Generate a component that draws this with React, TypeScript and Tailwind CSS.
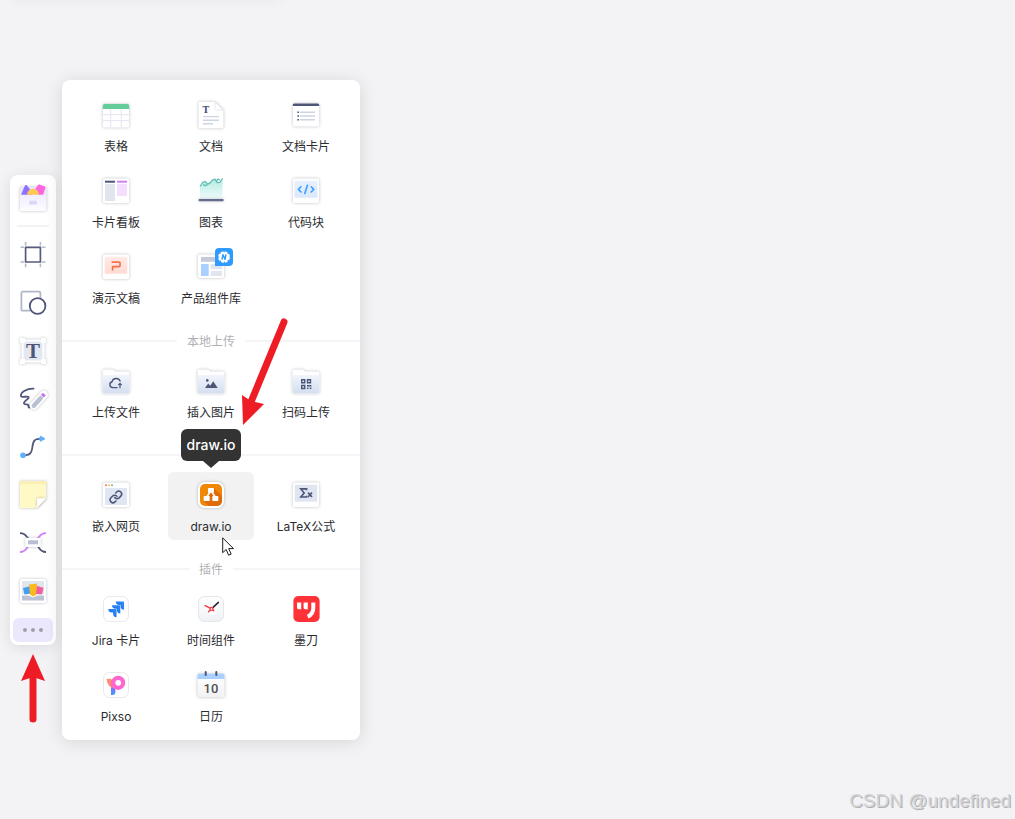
import { type ReactNode } from "react";
import clsx from "clsx";

function Icon({ children }: { children: ReactNode }) {
  return (
    <svg
      viewBox="0 0 40 40"
      className="size-10 shrink-0 overflow-visible"
      fill="none"
      aria-hidden="true"
    >
      {children}
    </svg>
  );
}

const paper = "drop-shadow-[0_0.5px_1.5px_rgba(40,42,60,0.32)]";

function Card({ y = 6.5, h = 24.5 }: { y?: number; h?: number }) {
  return <rect x="6.8" y={y} width="26.4" height={h} rx="2" fill="#fff" className={paper} />;
}

function Folder({ children }: { children: ReactNode }) {
  return (
    <Icon>
      <linearGradient id="folder" x1="0" y1="0" x2="0" y2="1">
        <stop stopColor="#f1f5fc" />
        <stop offset="1" stopColor="#d3deef" />
      </linearGradient>
      <path
        className={paper}
        fill="#fff"
        d="M6.5 9.2a1.8 1.8 0 0 1 1.8-1.8h8.2c1.4 0 1.8 2.2 3.2 2.2h12a1.8 1.8 0 0 1 1.8 1.8v18.4a1.8 1.8 0 0 1-1.8 1.8H8.3a1.8 1.8 0 0 1-1.8-1.8z"
      />
      <path fill="url(#folder)" d="M6.8 13h26.4v16.8a1.5 1.5 0 0 1-1.5 1.5H8.3a1.5 1.5 0 0 1-1.5-1.5z" />
      {children}
    </Icon>
  );
}

const TableIcon = () => (
  <Icon>
    <Card y={8} h={23.5} />
    <path fill="#64cc9a" d="M6.8 13V9.5A1.5 1.5 0 0 1 8.3 8h23.4a1.5 1.5 0 0 1 1.5 1.5V13z" />
    <path stroke="#e3e6f1" d="M14.7 13v18M25.3 13v18M7 18.7h26M7 24.7h26" />
  </Icon>
);

const DocIcon = () => (
  <Icon>
    <path className={paper} fill="#fff" d="M9 5.8h15l8.5 8.5v16.5a1.5 1.5 0 0 1-1.5 1.5H9a1.500 1.500 0 0 1-1.500-1.500V7.300A1.500 1.500 0 0 1 9 5.800z" />
    <path fill="#fff" stroke="#e0e2ea" strokeWidth=".8" d="M24 6v6.800a1.300 1.300 0 0 0 1.300 1.300h7z" />
    <text x="11.5" y="16.5" fontSize="9" fontWeight="700" fill="#4d5578" className="font-['DejaVu_Serif',serif]">T</text>
    <path stroke="#cdd4e3" strokeWidth="1.4" d="M12 20.6h16M12 24.2h16M12 27.8h10" />
  </Icon>
);

const DocCardIcon = () => (
  <Icon>
    <Card y={7.5} h={23} />
    <path fill="#4d5578" d="M6.8 10V9a1.5 1.5 0 0 1 1.5-1.5h23.4A1.5 1.5 0 0 1 33.2 9v1z" />
    <path stroke="#cdd4e3" strokeWidth="1.4" d="M14 16.2h15M14 20h15M14 23.8h15" />
    <path stroke="#4d5578" strokeWidth="1.5" d="M11.4 16.2H13M11.4 20H13M11.4 23.8H13" />
  </Icon>
);

const KanbanIcon = () => (
  <Icon>
    <Card />
    <path fill="#4d5578" d="M9 8.7h10v2H9z" />
    <path fill="#e0e5ee" d="M9 12h10v17H9z" />
    <path fill="#d07ff5" d="M21 8.7h10v2H21z" />
    <path fill="#f4defe" d="M21 12h10v12H21z" />
  </Icon>
);

const ChartIcon = () => (
  <Icon>
    <linearGradient id="area" x1="0" y1="0" x2="0" y2="1">
      <stop stopColor="#b4ebe5" />
      <stop offset="1" stopColor="#effbfa" />
    </linearGradient>
    <path fill="url(#area)" d="M9 26.5V15l2.5-4 3-1 2.500 2.500 4-3.500 3-1.500 2 3.500 3-1 2.500-3v19.500z" />
    <path
      stroke="#5fbfb3"
      strokeWidth="1.3"
      strokeLinejoin="round"
      d="M9 14.5l2.5-4 3-.8 2 2.4 2.7-1.2 1.8-2.6 3-1.2 2.2 3.6 2.6-.3 2.9-4M12 13l3 .5 4-2.5M25 9.500l2-2.500 2 1"
    />
    <path fill="#646b8e" className={paper} d="M7.7 27h24.8v2.2H7.7z" />
  </Icon>
);

const CodeIcon = () => (
  <Icon>
    <linearGradient id="code" x1="0" y1="0" x2="0" y2="1">
      <stop stopColor="#e9f1fd" />
      <stop offset="1" stopColor="#d9e8fb" />
    </linearGradient>
    <Card />
    <path fill="url(#code)" d="M8.5 8.7h23v17h-23z" />
    <path
      stroke="#3c9dff"
      strokeWidth="1.6"
      strokeLinejoin="round"
      strokeLinecap="round"
      d="M15 14.8l-2.6 2.6L15 20M25.2 14.8l2.6 2.6-2.6 2.6M21.4 13.2l-2.6 8.200"
    />
  </Icon>
);

const SlidesIcon = () => (
  <Icon>
    <linearGradient id="slides" x1="0" y1="0" x2="0" y2="1">
      <stop stopColor="#ffebe7" />
      <stop offset="1" stopColor="#ffd9d2" />
    </linearGradient>
    <Card />
    <path fill="url(#slides)" d="M8.7 8.7h22.6v17H8.7z" />
    <path stroke="#f9704c" strokeWidth="1.7" strokeLinejoin="round" d="M15.6 14.2h7.6q.8 0 .8.8v2.8q0 .8-.8.8h-6.6v4" />
  </Icon>
);

const LibraryIcon = () => (
  <Icon>
    <Card y={6.5} h={23.5} />
    <path fill="#c5c9d8" d="M10 9h20v4.7H10z" />
    <path fill="#a9d0ff" d="M10 16h7.7v12H10z" />
    <path fill="#e0e5ee" d="M19.7 16H31v5.3H19.7zM19.7 23H31v5H19.7z" />
    <path fill="#2f9bff" d="M24 18V4a4 4 0 0 1 4-4h10a4 4 0 0 1 4 4v10a4 4 0 0 1-4 4z" />
    <circle cx="33" cy="9" r="4.8" fill="#fff" />
    <circle cx="33" cy="9" r="5" stroke="#fff" strokeWidth="1.8" strokeDasharray="2.8 1.13" />
    <path stroke="#2f9bff" strokeWidth="1.4" strokeLinejoin="round" d="M31 11.6l.9-5 2.2 4.8.9-5" />
  </Icon>
);

const UploadIcon = () => (
  <Folder>
    <path stroke="#4d5578" strokeWidth="1.4" strokeLinecap="round" d="M21 25.6h-4.200a3 3 0 0 1-.7-5.900 4.200 4.200 0 0 1 8-.6" />
    <path stroke="#4d5578" strokeWidth="1.2" d="M24 26.2v-4.6M22.300 23.200l1.700-1.800 1.700 1.800" />
  </Folder>
);

const PictureIcon = () => (
  <Folder>
    <circle cx="16.3" cy="18.4" r="1.3" fill="#4d5578" />
    <path fill="#4d5578" d="M14 26l3.2-4.5 2 2.2 3-4.4L26.7 26z" />
  </Folder>
);

const QrIcon = () => (
  <Folder>
    <path stroke="#4d5578" strokeWidth="1.4" d="M15.7 17.7h3v3h-3zM21.5 17.7h3v3h-3zM15.7 23.5h3v3h-3z" />
    <path fill="#4d5578" d="M21 23h4.400v1.500H21zM21 25.600h1.500v1.500H21zM23.800 25.600h1.600v1.500h-1.600z" />
  </Folder>
);

const WebIcon = () => (
  <Icon>
    <Card />
    <circle cx="10" cy="9.3" r="1" fill="#f26b5e" />
    <circle cx="13" cy="9.3" r="1" fill="#f6c04d" />
    <circle cx="16" cy="9.3" r="1" fill="#5cc46b" />
    <path fill="#e0e7f2" d="M9 12h22v17H9z" />
    <g transform="translate(12.9 14) scale(.58)" stroke="#4d5578" strokeWidth="2.6" strokeLinecap="round">
      <path d="M10 13a5 5 0 0 0 7.54.54l3-3a5 5 0 0 0-7.07-7.07l-1.72 1.71" />
      <path d="M14 11a5 5 0 0 0-7.54-.54l-3 3a5 5 0 0 0 7.07 7.07l1.71-1.71" />
    </g>
  </Icon>
);

const DrawioIcon = () => (
  <Icon>
    <rect x="7" y="6" width="26" height="26" rx="6.5" fill="#fff" className={paper} />
    <rect x="9" y="8" width="22" height="22" rx="5" fill="#f08705" />
    <path fill="#df6c0c" d="M23 12l8 8v5a5 5 0 0 1-5 5h-8.500l-4.800-5 6-8z" />
    <path stroke="#fff" strokeWidth="1.5" d="M16 20.5l3.5-5M24 20.5l-3.500-5" />
    <rect x="17" y="12" width="6" height="4.8" rx=".8" fill="#fff" />
    <rect x="12.7" y="20" width="6" height="5" rx=".8" fill="#fff" />
    <rect x="21.3" y="20" width="6" height="5" rx=".8" fill="#fff" />
  </Icon>
);

const LatexIcon = () => (
  <Icon>
    <Card />
    <path fill="#dfe6f2" d="M8.7 8.7h22.6v17H8.7z" />
    <path stroke="#4d5578" strokeWidth="1.6" d="M20.6 14.2v-1.300h-5.800l3.400 4.100-3.400 4h5.800v-1.300" />
    <path stroke="#4d5578" strokeWidth="1.6" d="M22 16.6l4 4.4M26 16.6L22 21" />
  </Icon>
);

const JiraIcon = () => (
  <Icon>
    <rect x="7.5" y="6.5" width="25" height="25" rx="6" fill="#fff" stroke="#e9e9ec" />
    <linearGradient id="jira" x1="1" y1="0" x2="0" y2="1">
      <stop stopColor="#2f8bff" />
      <stop offset="1" stopColor="#146ee6" />
    </linearGradient>
    <g fill="url(#jira)" transform="translate(12.3 11.5) scale(.655)">
      <path d="M11.57 11.51H0a5.22 5.22 0 0 0 5.23 5.22h2.13v2.06A5.22 5.22 0 0 0 12.57 24V12.52a1 1 0 0 0-1-1.01z" />
      <path d="M17.29 5.76H5.74a5.22 5.22 0 0 0 5.21 5.21h2.13v2.06a5.22 5.22 0 0 0 5.22 5.21V6.76a1 1 0 0 0-1.01-1z" />
      <path d="M23.01 0H11.46a5.22 5.22 0 0 0 5.21 5.22h2.13v2.05A5.22 5.22 0 0 0 24 12.48V1a1 1 0 0 0-.99-1z" />
    </g>
  </Icon>
);

const ClockIcon = () => (
  <Icon>
    <linearGradient id="clock" x1="0" y1="0" x2="0" y2="1">
      <stop stopColor="#fff" />
      <stop offset="1" stopColor="#eef1f5" />
    </linearGradient>
    <rect x="7.5" y="6.5" width="25" height="25" rx="6" fill="url(#clock)" stroke="#e3e6ea" />
    <circle cx="20.5" cy="19" r="6.5" fill="#fafbfc" />
    <path stroke="#22252e" strokeWidth="1.5" strokeLinecap="round" d="M21.8 17.6l5.6-5.2" />
    <path stroke="#f53b45" strokeWidth="1.4" strokeLinecap="round" d="M14 15.6l5.2 2.6M19.2 20.2l-1.800 1.600M22 20l.8.8" />
    <circle cx="20.5" cy="18.9" r="1.5" stroke="#f53b45" strokeWidth="1.2" />
  </Icon>
);

const ModaoIcon = () => (
  <Icon>
    <rect x="7.4" y="6" width="26.2" height="26" rx="5" fill="#ff3237" />
    <path fill="#fff" d="M11 12.4h4.2v6.8h-2.800a1.400 1.400 0 0 1-1.400-1.400zM17.600 12.400h4.200v6.800H19a1.400 1.400 0 0 1-1.400-1.400z" />
    <path stroke="#fff" strokeWidth="4" d="M27.300 12.400v5.400c0 4.600-2.200 7.400-5.600 8.800" />
  </Icon>
);

const PixsoIcon = () => (
  <Icon>
    <linearGradient id="pixso-arm" x1="0" y1="0" x2="1" y2="1">
      <stop stopColor="#ff9b5e" />
      <stop offset="1" stopColor="#ff6fa8" />
    </linearGradient>
    <linearGradient id="pixso-stem" x1="0" y1="0" x2="0" y2="1">
      <stop stopColor="#a05bff" />
      <stop offset="1" stopColor="#3d9bff" />
    </linearGradient>
    <rect x="7.5" y="6.500" width="25" height="25" rx="6" fill="#fff" stroke="#e9e9ec" />
    <path fill="url(#pixso-stem)" d="M15 18l4.400 3v5.600A2.600 2.600 0 0 1 16.800 29H15z" />
    <path fill="url(#pixso-arm)" d="M10.600 12.800h4.200l5.200 5.600-1.600 4.200a9.600 9.600 0 0 1-7.800-9.800z" />
    <circle cx="22.2" cy="16.8" r="5" stroke="#ff66d0" strokeWidth="4.200" />
  </Icon>
);

const CalendarIcon = () => (
  <Icon>
    <linearGradient id="cal" x1="0" y1="0" x2="0" y2="1">
      <stop stopColor="#fff" />
      <stop offset="1" stopColor="#f2f2f4" />
    </linearGradient>
    <rect x="6.5" y="7.7" width="27" height="23.6" rx="2" fill="url(#cal)" className={paper} />
    <path fill="#a9d0ff" d="M6.500 13V9.500a1.800 1.800 0 0 1 1.800-1.800h23.400a1.800 1.800 0 0 1 1.800 1.800V13z" />
    <path stroke="#4d5578" strokeWidth="2" strokeLinecap="round" d="M14.7 6v3M25.300 6v3" />
    <text x="20" y="26.6" textAnchor="middle" fontSize="13" fontWeight="500" fill="#505050" className="font-[Roboto,sans-serif]">10</text>
  </Icon>
);

const MaterialsIcon = () => (
  <Icon>
    <linearGradient id="box" x1="0" y1="0" x2="0" y2="1">
      <stop stopColor="#e9e5ff" />
      <stop offset="1" stopColor="#fdfdff" />
    </linearGradient>
    <rect x="7" y="9" width="26.5" height="24" rx="2" fill="url(#box)" className={paper} />
    <path fill="#8c70ff" d="M8 16.800l4-9.200q.6-1.200 1.800-.4l4.800 6.400v3.200z" />
    <path fill="#ff66dd" d="M22 11.600l2.800-4.400q.6-1 1.800-.6l5.200 1.800q1 .4.6 1.400l-2.200 7h-5.400z" />
    <path fill="#ffc94f" d="M14 16.800a6 6 0 0 1 12 0z" />
    <rect x="16" y="22.7" width="8" height="3.8" rx="1" fill="#dbd6f8" />
  </Icon>
);

const FrameIcon = () => (
  <Icon>
    <path
      stroke="#b3bac8"
      strokeWidth="1.6"
      d="M7.5 12.300H11M29 12.300h3.500M7.500 27H11M29 27h3.500M12.600 7v3.500M27.400 7v3.500M12.600 28.800v3.500M27.400 28.800v3.500"
    />
    <path stroke="#565b7e" strokeWidth="1.7" d="M12.600 12.300h14.800V27H12.600z" />
  </Icon>
);

const ShapesIcon = () => (
  <Icon>
    <rect x="8.400" y="8.700" width="19" height="19" rx="1.5" stroke="#b0b7c6" strokeWidth="1.8" />
    <circle cx="24.6" cy="23" r="7.800" fill="#fff" stroke="#50557a" strokeWidth="1.8" />
  </Icon>
);

const TextIcon = () => (
  <Icon>
    <g className={paper}>
      <path fill="#e3e8f0" stroke="#fff" strokeWidth="2" d="M9.500 9.500h21v21h-21z" />
      <path fill="#fff" d="M7 7h5v5H7zM28 7h5v5h-5zM7 28h5v5H7zM28 28h5v5h-5z" />
    </g>
    <text x="20" y="26.600" textAnchor="middle" fontSize="21" fontWeight="700" fill="#4d5578" className="font-['Liberation_Serif',serif]">T</text>
  </Icon>
);

const PenIcon = () => (
  <Icon>
    <path
      stroke="#50557a"
      strokeWidth="1.8"
      strokeLinecap="round"
      d="M20.500 9.700C14 9.400 7.600 13 7.900 16.600c.3 2.800 5.600.2 7.200 1.200 2.400 1.600-4.600 4-4.200 6.600.3 1.800 3.600.4 4.400 1.600.6 1-.4 2 1 2.600"
    />
    <path className={paper} stroke="#fff" strokeWidth="8" strokeLinecap="round" d="M21 26.500l9.800-10.800" />
    <path stroke="#b9c0d2" strokeWidth="4.500" strokeLinecap="round" d="M20.800 26.800l7-7.700" />
    <path stroke="#cb72f5" strokeWidth="4" d="M29.400 17.200l2-2.200" />
  </Icon>
);

const ConnectorIcon = () => (
  <Icon>
    <path stroke="#565b7e" strokeWidth="1.8" d="M10 28.300c7 0 8.700-2 9.400-8.300s2-8.300 9.300-8.300" />
    <circle cx="10" cy="28.300" r="2.800" fill="#5fb0ff" />
    <path fill="#5fb0ff" stroke="#5fb0ff" strokeLinejoin="round" d="M27.500 9.200l4.500 2.500-4.500 2.600-1-2.600z" />
  </Icon>
);

const StickyIcon = () => (
  <Icon>
    <path className={paper} fill="#fff9c6" d="M7 6.200h26.300v17.300L24 33H7z" />
    <path fill="#f9efb0" d="M7 6.200h26.300v3H7z" />
    <path className={paper} fill="#fff" d="M24 32.800v-8a1.500 1.500 0 0 1 1.500-1.500h7.800z" />
  </Icon>
);

const MindMapIcon = () => (
  <Icon>
    <path stroke="#50557a" strokeWidth="1.8" d="M7 10.200c7 0 6 5 9 5M33 29c-7 0-6-5-9-6" />
    <path stroke="#d07ff5" strokeWidth="1.8" d="M33 10.200c-7 0-6 5-9 5M7 29c7 0 6-5 9-6" />
    <rect x="12.3" y="14.7" width="15.500" height="9.200" rx="1.5" fill="#fff" className={paper} />
    <path fill="#b9bed4" d="M15 17.300h10v4H15z" />
  </Icon>
);

const GalleryIcon = () => (
  <Icon>
    <rect x="7" y="8" width="26.200" height="24" rx="2" fill="#fff" className={paper} />
    <path fill="#e0e6f0" d="M9 10h22v13H9z" />
    <path fill="#b9c3d4" d="M9 24.500h6.500l4.500 2 4.500-2H31v5H9z" />
    <path fill="#42a0ee" d="M10 17l7-1.800 1 7.300-6.600 1z" />
    <path fill="#f25fa0" d="M23.500 14.800l7 2-1.500 6.700-6.500-.5z" />
    <path fill="#f9b91f" d="M16 13.600l8-1-1 11.400-3 1.500-3-2z" />
  </Icon>
);

interface Entry {
  label: string;
  icon: () => ReactNode;
  active?: boolean;
}

const groups: { title?: string; items: Entry[] }[] = [
  {
    items: [
      { label: "表格", icon: TableIcon },
      { label: "文档", icon: DocIcon },
      { label: "文档卡片", icon: DocCardIcon },
      { label: "卡片看板", icon: KanbanIcon },
      { label: "图表", icon: ChartIcon },
      { label: "代码块", icon: CodeIcon },
      { label: "演示文稿", icon: SlidesIcon },
      { label: "产品组件库", icon: LibraryIcon },
    ],
  },
  {
    title: "本地上传",
    items: [
      { label: "上传文件", icon: UploadIcon },
      { label: "插入图片", icon: PictureIcon },
      { label: "扫码上传", icon: QrIcon },
    ],
  },
  {
    items: [
      { label: "嵌入网页", icon: WebIcon },
      { label: "draw.io", icon: DrawioIcon, active: true },
      { label: "LaTeX公式", icon: LatexIcon },
    ],
  },
  {
    title: "插件",
    items: [
      { label: "Jira 卡片", icon: JiraIcon },
      { label: "时间组件", icon: ClockIcon },
      { label: "墨刀", icon: ModaoIcon },
      { label: "Pixso", icon: PixsoIcon },
      { label: "日历", icon: CalendarIcon },
    ],
  },
];

const tools = [
  { name: "画板", icon: FrameIcon },
  { name: "图形", icon: ShapesIcon },
  { name: "文本", icon: TextIcon },
  { name: "画笔", icon: PenIcon },
  { name: "连线", icon: ConnectorIcon },
  { name: "便签", icon: StickyIcon },
  { name: "思维导图", icon: MindMapIcon },
  { name: "图片", icon: GalleryIcon },
];

function Toolbar() {
  return (
    <nav
      aria-label="工具栏"
      className="relative flex w-[46px] shrink-0 flex-col items-center rounded-lg bg-white pb-[3px] shadow-[0_2px_14px_rgba(0,0,0,0.1)]"
    >
      <button aria-label="素材库" className="flex h-[46px] items-center">
        <MaterialsIcon />
      </button>
      <div className="my-1 h-0.5 w-8 bg-[#f3f3f5]" />
      {tools.map(({ name, icon: Glyph }) => (
        <button key={name} aria-label={name} className="flex h-12 items-center">
          <Glyph />
        </button>
      ))}
      <button
        aria-label="更多"
        className="mt-[3px] flex h-6 w-10 items-center justify-center gap-1 rounded-md bg-[#ebe7fd]"
      >
        <span className="size-1 rounded-full bg-[#a1a0a8]" />
        <span className="size-1 rounded-full bg-[#a1a0a8]" />
        <span className="size-1 rounded-full bg-[#a1a0a8]" />
      </button>
      <svg viewBox="0 0 26 70" className="absolute top-[479px] left-[10px] h-[70px] w-[26px]" aria-hidden="true">
        <path d="M13 65V20" stroke="#ee1c25" strokeWidth="7" strokeLinecap="round" />
        <path d="M13 0l12 27-12-4-12 4z" fill="#ee1c25" />
      </svg>
    </nav>
  );
}

function Divider({ title }: { title?: string }) {
  return (
    <div className="mt-[18px] mb-1.5 flex h-[22px] items-center gap-2.5 text-xs text-[#b1b1b5]">
      <div className="h-0.5 flex-1 bg-[#f5f5f7]" />
      {title && (
        <>
          <h2 className="pt-0.5">{title}</h2>
          <div className="h-0.5 flex-1 bg-[#f5f5f7]" />
        </>
      )}
    </div>
  );
}

function PanelItem({ label, icon: Glyph, active }: Entry) {
  return (
    <button
      className={clsx(
        "relative flex h-[68px] flex-col items-center rounded-md pt-1 text-[#2b2c30]",
        active && "bg-[#f2f2f2]"
      )}
    >
      <Glyph />
      <span className="mt-[3px] text-xs whitespace-nowrap">{label}</span>
      {active && (
        <>
          <span
            role="tooltip"
            className="absolute bottom-full mb-[11px] flex h-8 items-center rounded-md bg-[#333] px-1.5 text-sm font-medium text-white"
          >
            {label}
            <span className="absolute top-full left-1/2 -ml-2 border-x-8 border-t-[7px] border-x-transparent border-t-[#333]" />
          </span>
          <svg viewBox="0 0 14 20" className="absolute top-[65px] left-[54px] h-5 w-3.5" aria-hidden="true">
            <path
              d="M.7.9v14.800l3.500-3.200 2.400 5.700 2.600-1.100-2.500-5.500h4.800z"
              fill="#fff"
              stroke="#1e1e24"
              strokeLinejoin="round"
            />
          </svg>
        </>
      )}
    </button>
  );
}

function InsertPanel() {
  return (
    <section
      aria-label="插入"
      className="relative w-[298px] shrink-0 rounded-lg bg-white pt-3 pb-2.5 shadow-[0_2px_18px_rgba(0,0,0,0.12)]"
    >
      {groups.map(({ title, items }, i) => (
        <div key={i}>
          {i > 0 && <Divider title={title} />}
          <div className="grid grid-cols-3 gap-x-[9px] gap-y-2 px-[11px]">
            {items.map((item) => (
              <PanelItem key={item.label} {...item} />
            ))}
          </div>
        </div>
      ))}
      <svg viewBox="0 0 50 110" className="absolute top-[237px] left-[179px] h-[110px] w-[50px]" aria-hidden="true">
        <path d="M43 5L10 85" stroke="#ee1c25" strokeWidth="7" strokeLinecap="round" />
        <path d="M1 78l9 6 13 3L2 108z" fill="#ee1c25" />
      </svg>
    </section>
  );
}

const stamps = [
  [592, 192],
  [825, 425],
  [600, 650],
];

function Stamps() {
  return (
    <div
      aria-hidden="true"
      className="pointer-events-none absolute inset-0 overflow-hidden text-center font-['Liberation_Serif','Noto_Sans_CJK_SC',serif] text-lg leading-[22px] text-black/[0.015] select-none"
    >
      {stamps.map(([x, y]) => (
        <div
          key={`${x}-${y}`}
          className="absolute -mt-11 -ml-20 w-40 -rotate-45 whitespace-nowrap"
          style={{ left: x, top: y }}
        >
          penghonghao
          <br />
          10.10.24.104
          <br />
          博思
          <br />
          2026/02/09 16:46
        </div>
      ))}
    </div>
  );
}

export default function App() {
  return (
    <main className="relative flex min-h-screen items-center gap-1.5 overflow-hidden bg-[#f3f3f5] pt-px pl-2.5 font-[Inter,'Noto_Sans_CJK_SC',sans-serif]">
      <div className="absolute -top-4 left-2.5 h-4 w-[272px] rounded-lg shadow-[0_0_14px_rgba(0,0,0,0.05)]" />
      <Toolbar />
      <InsertPanel />
      <Stamps />
      <p className="absolute right-1 bottom-1.5 font-['Liberation_Sans',sans-serif] text-[19px] leading-6 text-[#d4d4d6] [text-shadow:1px_1px_0_#b0b0b3]">
        CSDN @undefined
      </p>
    </main>
  );
}
